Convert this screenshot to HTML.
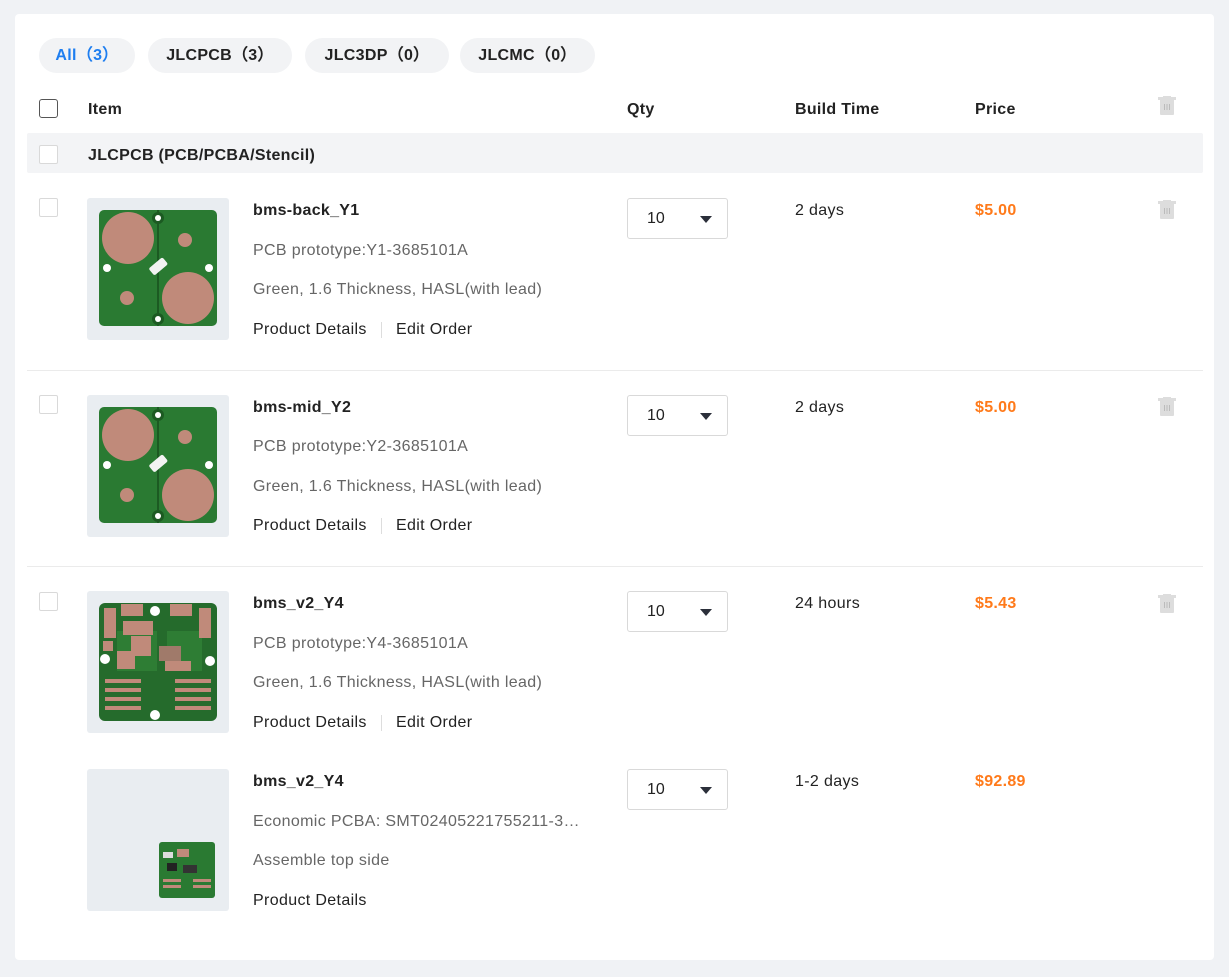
<!DOCTYPE html>
<html><head><meta charset="utf-8"><style>
*{margin:0;padding:0;box-sizing:border-box}
body{width:1229px;height:977px;background:#f0f2f5;font-family:"Liberation Sans",Arial,sans-serif;position:relative;overflow:hidden;color:#222}
.card{position:absolute;left:15px;top:14px;width:1199px;height:946px;background:#fff;border-radius:4px}
.a{position:absolute;white-space:nowrap}
.pill{position:absolute;top:38px;height:35px;border-radius:18px;background:#f2f3f5;font-weight:bold;font-size:16px;line-height:35px;text-align:center;color:#222;letter-spacing:0.3px}
.cb{position:absolute;width:19px;height:19px;border:1px solid #d9d9d9;border-radius:2px;background:#fff}
.h{font-weight:bold;font-size:16px;line-height:20px;letter-spacing:0.3px}
.t{font-size:16px;line-height:20px;letter-spacing:0.35px}
.g{color:#666}
.o{color:#ff7a1a;font-weight:bold;font-size:16px;line-height:20px;letter-spacing:0.3px}
.img{position:absolute;left:87px;width:142px;height:142px;background:#e9edf1;border-radius:3px}
.sel{position:absolute;left:627px;width:101px;height:41px;border:1px solid #d9d9d9;border-radius:3px}
.sel span{position:absolute;left:19px;top:11px;font-size:16px}
.sel i{position:absolute;left:72px;top:17px;width:0;height:0;border-left:6px solid transparent;border-right:6px solid transparent;border-top:7px solid #2b2f3a}
.sep{position:absolute;left:381px;width:1px;height:16px;background:#ddd}
.line{position:absolute;left:27px;width:1176px;height:1px;background:#ebebeb}
</style></head><body>
<div class="card"></div>
<div class="pill" style="left:39px;width:96px;color:#1e7ef0">All（3）</div>
<div class="pill" style="left:148px;width:144px">JLCPCB（3）</div>
<div class="pill" style="left:305px;width:144px">JLC3DP（0）</div>
<div class="pill" style="left:460px;width:135px">JLCMC（0）</div>

<div class="cb" style="left:39px;top:99px;border:1.5px solid #555;border-radius:3px"></div>
<div class="a h" style="left:88px;top:100px">Item</div>
<div class="a h" style="left:627px;top:100px">Qty</div>
<div class="a h" style="left:795px;top:100px">Build Time</div>
<div class="a h" style="left:975px;top:100px">Price</div>

<svg class="a" style="left:1157px;top:96px" width="20" height="20" viewBox="0 0 20 20"><rect x="1" y="1" width="18" height="3" fill="#ddd"/><rect x="6" y="0" width="8" height="2" fill="#ddd"/><path d="M3 4h14v14a1 1 0 0 1-1 1H4a1 1 0 0 1-1-1z" fill="#ddd"/><path d="M7.5 8v6M10 8v6M12.5 8v6" stroke="#bbb" stroke-width="1"/></svg>

<div class="a" style="left:27px;top:133px;width:1176px;height:40px;background:#f3f4f6;border-radius:2px"></div>
<div class="cb" style="left:39px;top:145px"></div>
<div class="a h" style="left:88px;top:146px">JLCPCB (PCB/PCBA/Stencil)</div>

<!-- row 1 -->
<div class="cb" style="left:39px;top:198px"></div>
<div class="img" style="top:198px"><svg width="142" height="142" viewBox="0 0 142 142"><rect x="12" y="12" width="118" height="116" rx="5" fill="#2a7a32"/><line x1="71" y1="12" x2="71" y2="128" stroke="#1c5a22" stroke-width="2"/><circle cx="41" cy="40" r="26" fill="#c08a7a"/><circle cx="101" cy="100" r="26" fill="#c08a7a"/><circle cx="98" cy="42" r="7" fill="#c08a7a"/><circle cx="40" cy="100" r="7" fill="#c08a7a"/><circle cx="71" cy="20" r="6" fill="#1c5a22"/><circle cx="71" cy="20" r="3" fill="#fff"/><circle cx="71" cy="121" r="6" fill="#1c5a22"/><circle cx="71" cy="121" r="3" fill="#fff"/><circle cx="20" cy="70" r="4" fill="#fff"/><circle cx="122" cy="70" r="4" fill="#fff"/><rect x="62" y="64" width="18" height="9" rx="2" fill="#f3f3f3" transform="rotate(-40 71 68)"/></svg></div>
<div class="a h" style="left:253px;top:201px">bms-back_Y1</div>
<div class="a t g" style="left:253px;top:241px">PCB prototype:Y1-3685101A</div>
<div class="a t g" style="left:253px;top:280px">Green, 1.6 Thickness, HASL(with lead)</div>
<div class="a t" style="left:253px;top:320px">Product Details</div><div class="sep" style="top:322px"></div>
<div class="a t" style="left:396px;top:320px">Edit Order</div>
<div class="sel" style="top:198px"><span>10</span><i></i></div>
<div class="a t" style="left:795px;top:201px">2 days</div>
<div class="a o" style="left:975px;top:201px">$5.00</div>
<svg class="a" style="left:1157px;top:200px" width="20" height="20" viewBox="0 0 20 20"><rect x="1" y="1" width="18" height="3" fill="#ddd"/><rect x="6" y="0" width="8" height="2" fill="#ddd"/><path d="M3 4h14v14a1 1 0 0 1-1 1H4a1 1 0 0 1-1-1z" fill="#ddd"/><path d="M7.5 8v6M10 8v6M12.5 8v6" stroke="#bbb"/></svg>
<div class="line" style="top:370px"></div>

<!-- row 2 -->
<div class="cb" style="left:39px;top:395px"></div>
<div class="img" style="top:395px"><svg width="142" height="142" viewBox="0 0 142 142"><rect x="12" y="12" width="118" height="116" rx="5" fill="#2a7a32"/><line x1="71" y1="12" x2="71" y2="128" stroke="#1c5a22" stroke-width="2"/><circle cx="41" cy="40" r="26" fill="#c08a7a"/><circle cx="101" cy="100" r="26" fill="#c08a7a"/><circle cx="98" cy="42" r="7" fill="#c08a7a"/><circle cx="40" cy="100" r="7" fill="#c08a7a"/><circle cx="71" cy="20" r="6" fill="#1c5a22"/><circle cx="71" cy="20" r="3" fill="#fff"/><circle cx="71" cy="121" r="6" fill="#1c5a22"/><circle cx="71" cy="121" r="3" fill="#fff"/><circle cx="20" cy="70" r="4" fill="#fff"/><circle cx="122" cy="70" r="4" fill="#fff"/><rect x="62" y="64" width="18" height="9" rx="2" fill="#f3f3f3" transform="rotate(-40 71 68)"/></svg></div>
<div class="a h" style="left:253px;top:398px">bms-mid_Y2</div>
<div class="a t g" style="left:253px;top:437px">PCB prototype:Y2-3685101A</div>
<div class="a t g" style="left:253px;top:477px">Green, 1.6 Thickness, HASL(with lead)</div>
<div class="a t" style="left:253px;top:516px">Product Details</div><div class="sep" style="top:518px"></div>
<div class="a t" style="left:396px;top:516px">Edit Order</div>
<div class="sel" style="top:395px"><span>10</span><i></i></div>
<div class="a t" style="left:795px;top:398px">2 days</div>
<div class="a o" style="left:975px;top:398px">$5.00</div>
<svg class="a" style="left:1157px;top:397px" width="20" height="20" viewBox="0 0 20 20"><rect x="1" y="1" width="18" height="3" fill="#ddd"/><rect x="6" y="0" width="8" height="2" fill="#ddd"/><path d="M3 4h14v14a1 1 0 0 1-1 1H4a1 1 0 0 1-1-1z" fill="#ddd"/><path d="M7.5 8v6M10 8v6M12.5 8v6" stroke="#bbb"/></svg>
<div class="line" style="top:566px"></div>

<!-- row 3 -->
<div class="cb" style="left:39px;top:592px"></div>
<div class="img" style="top:591px"><svg width="142" height="142" viewBox="0 0 142 142"><rect x="12" y="12" width="118" height="118" rx="6" fill="#256b2c"/><g fill="#2e7d34"><rect x="30" y="40" width="40" height="40"/><rect x="80" y="40" width="35" height="40"/></g><rect x="34" y="13" width="22" height="12" fill="#c08a7a"/><rect x="83" y="13" width="22" height="12" fill="#c08a7a"/><rect x="17" y="17" width="12" height="30" fill="#c08a7a"/><rect x="112" y="17" width="12" height="30" fill="#c08a7a"/><rect x="36" y="30" width="30" height="14" fill="#c08a7a"/><rect x="44" y="45" width="20" height="20" fill="#c08a7a"/><rect x="30" y="60" width="18" height="18" fill="#c08a7a"/><rect x="16" y="50" width="10" height="10" fill="#c08a7a"/><rect x="72" y="55" width="22" height="15" fill="#a07a6a"/><circle cx="68" cy="20" r="5" fill="#fff"/><circle cx="68" cy="124" r="5" fill="#fff"/><circle cx="18" cy="68" r="5" fill="#fff"/><circle cx="123" cy="70" r="5" fill="#fff"/><g fill="#c08a7a"><rect x="18" y="88" width="36" height="4"/><rect x="18" y="97" width="36" height="4"/><rect x="18" y="106" width="36" height="4"/><rect x="18" y="115" width="36" height="4"/><rect x="88" y="88" width="36" height="4"/><rect x="88" y="97" width="36" height="4"/><rect x="88" y="106" width="36" height="4"/><rect x="88" y="115" width="36" height="4"/><rect x="78" y="70" width="26" height="10"/></g></svg></div>
<div class="a h" style="left:253px;top:594px">bms_v2_Y4</div>
<div class="a t g" style="left:253px;top:634px">PCB prototype:Y4-3685101A</div>
<div class="a t g" style="left:253px;top:673px">Green, 1.6 Thickness, HASL(with lead)</div>
<div class="a t" style="left:253px;top:713px">Product Details</div><div class="sep" style="top:715px"></div>
<div class="a t" style="left:396px;top:713px">Edit Order</div>
<div class="sel" style="top:591px"><span>10</span><i></i></div>
<div class="a t" style="left:795px;top:594px">24 hours</div>
<div class="a o" style="left:975px;top:594px">$5.43</div>
<svg class="a" style="left:1157px;top:594px" width="20" height="20" viewBox="0 0 20 20"><rect x="1" y="1" width="18" height="3" fill="#ddd"/><rect x="6" y="0" width="8" height="2" fill="#ddd"/><path d="M3 4h14v14a1 1 0 0 1-1 1H4a1 1 0 0 1-1-1z" fill="#ddd"/><path d="M7.5 8v6M10 8v6M12.5 8v6" stroke="#bbb"/></svg>

<!-- row 4 -->
<div class="img" style="top:769px"><svg width="142" height="142" viewBox="0 0 142 142"><rect x="72" y="73" width="56" height="56" rx="3" fill="#2a7a32"/><rect x="76" y="83" width="10" height="6" fill="#ddd"/><rect x="90" y="80" width="12" height="8" fill="#c08a7a"/><rect x="80" y="94" width="10" height="8" fill="#222"/><rect x="96" y="96" width="14" height="8" fill="#333"/><g fill="#c08a7a"><rect x="76" y="110" width="18" height="3"/><rect x="76" y="116" width="18" height="3"/><rect x="106" y="110" width="18" height="3"/><rect x="106" y="116" width="18" height="3"/></g></svg></div>
<div class="a h" style="left:253px;top:772px">bms_v2_Y4</div>
<div class="a t g" style="left:253px;top:812px">Economic PCBA: SMT02405221755211-3…</div>
<div class="a t g" style="left:253px;top:851px">Assemble top side</div>
<div class="a t" style="left:253px;top:891px">Product Details</div>
<div class="sel" style="top:769px"><span>10</span><i></i></div>
<div class="a t" style="left:795px;top:772px">1-2 days</div>
<div class="a o" style="left:975px;top:772px">$92.89</div>
</body></html>
